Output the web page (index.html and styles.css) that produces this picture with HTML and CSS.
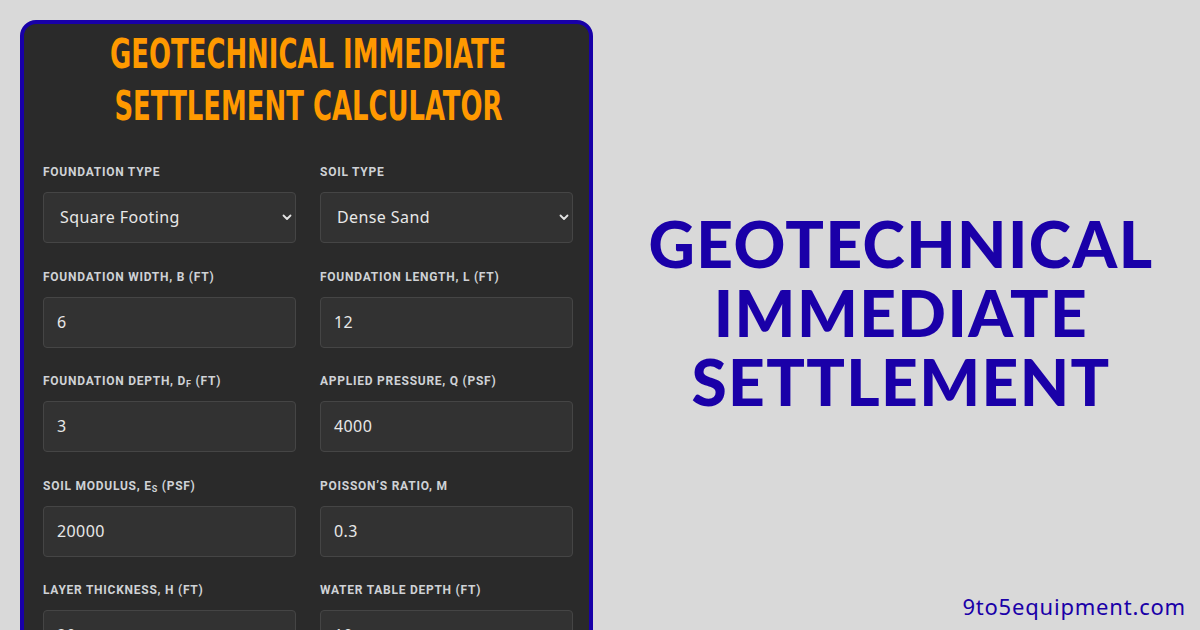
FILE: index.html
```html
<!DOCTYPE html>
<html>
<head>
<meta charset="utf-8">
<link rel="stylesheet" href="styles.css">
</head>
<body>
<div class="page">
  <div class="card">
    <h1 class="title"><span>GEOTECHNICAL IMMEDIATE</span><span>SETTLEMENT CALCULATOR</span></h1>
    <div class="grid">
      <div class="field">
        <div class="label">Foundation Type</div>
        <div class="box select"><span>Square Footing</span><svg class="chev" width="10" height="7" viewBox="0 0 10 7"><path d="M1.5 1.5 L5 5 L8.5 1.5" fill="none" stroke="#e4e4e4" stroke-width="1.8" stroke-linecap="round" stroke-linejoin="round"/></svg></div>
      </div>
      <div class="field">
        <div class="label">Soil Type</div>
        <div class="box select"><span>Dense Sand</span><svg class="chev" width="10" height="7" viewBox="0 0 10 7"><path d="M1.5 1.5 L5 5 L8.5 1.5" fill="none" stroke="#e4e4e4" stroke-width="1.8" stroke-linecap="round" stroke-linejoin="round"/></svg></div>
      </div>
      <div class="field">
        <div class="label">Foundation Width, B (ft)</div>
        <div class="box">6</div>
      </div>
      <div class="field">
        <div class="label">Foundation Length, L (ft)</div>
        <div class="box">12</div>
      </div>
      <div class="field">
        <div class="label">Foundation Depth, D<sub>f</sub> (ft)</div>
        <div class="box">3</div>
      </div>
      <div class="field">
        <div class="label">Applied Pressure, q (psf)</div>
        <div class="box">4000</div>
      </div>
      <div class="field">
        <div class="label">Soil Modulus, E<sub>s</sub> (psf)</div>
        <div class="box">20000</div>
      </div>
      <div class="field">
        <div class="label">Poisson’s Ratio, μ</div>
        <div class="box">0.3</div>
      </div>
      <div class="field">
        <div class="label">Layer Thickness, H (ft)</div>
        <div class="box">20</div>
      </div>
      <div class="field">
        <div class="label">Water Table Depth (ft)</div>
        <div class="box">10</div>
      </div>
    </div>
  </div>
  <div class="side">
    <div class="headline">GEOTECHNICAL<br>IMMEDIATE<br>SETTLEMENT</div>
    <div class="site">9to5equipment.com</div>
  </div>
</div>
</body>
</html>
```

FILE: styles.css
```css
* { box-sizing: border-box; }
html, body { margin: 0; padding: 0; }
body {
  width: 1200px;
  height: 630px;
  overflow: hidden;
  background: #d9d9d9;
}
.page {
  display: flex;
  height: 630px;
  overflow: hidden;
}
.card {
  margin: 20px 0 0 20px;
  width: 573px;
  height: 720px;
  flex-shrink: 0;
  border: 4px solid #1800a8;
  border-radius: 16px;
  background: #2a2a2a;
  padding: 4px 16px 0 19px;
}
.title {
  margin: 0;
  display: flex;
  flex-direction: column;
  align-items: center;
  color: #ff9900;
  font-family: "DejaVu Sans", sans-serif;
  font-stretch: condensed;
  font-weight: bold;
  font-size: 40px;
  line-height: 52px;
}
.title span {
  display: inline-block;
  white-space: nowrap;
  transform: scaleX(0.72);
}
.grid {
  margin-top: 33px;
  display: grid;
  grid-template-columns: 253px 253px;
  column-gap: 24px;
  row-gap: 26.5px;
}
.label {
  font-family: Roboto, sans-serif;
  font-weight: bold;
  font-size: 12px;
  line-height: 14px;
  letter-spacing: 0.75px;
  text-transform: uppercase;
  color: #cfd2d6;
  margin-bottom: 13px;
  white-space: nowrap;
}
.label sub {
  font-size: 9px;
  vertical-align: -2px;
  line-height: 0;
}
.box {
  height: 51px;
  border: 1px solid #454545;
  border-radius: 4px;
  background: #323232;
  display: flex;
  align-items: center;
  padding: 0 13px 1px;
  font-family: "Noto Sans", sans-serif;
  font-size: 16px;
  letter-spacing: 0.4px;
  color: #e8e8e8;
}
.select {
  padding: 0 3px 1px 16px;
  justify-content: space-between;
}
.chev { display: block; }
.side {
  flex: 1;
  display: flex;
  flex-direction: column;
}
.headline {
  margin-top: 209px;
  padding-left: 9px;
  text-align: center;
  font-family: Lato, sans-serif;
  font-weight: 900;
  font-size: 64px;
  line-height: 69px;
  letter-spacing: 1.4px;
  color: #1a00a8;
}
.site {
  margin-top: auto;
  align-self: flex-end;
  margin-right: 14px;
  margin-bottom: 11px;
  font-family: "Noto Sans", sans-serif;
  font-size: 22px;
  line-height: 26px;
  letter-spacing: 0.8px;
  color: #1a00a8;
}
```
